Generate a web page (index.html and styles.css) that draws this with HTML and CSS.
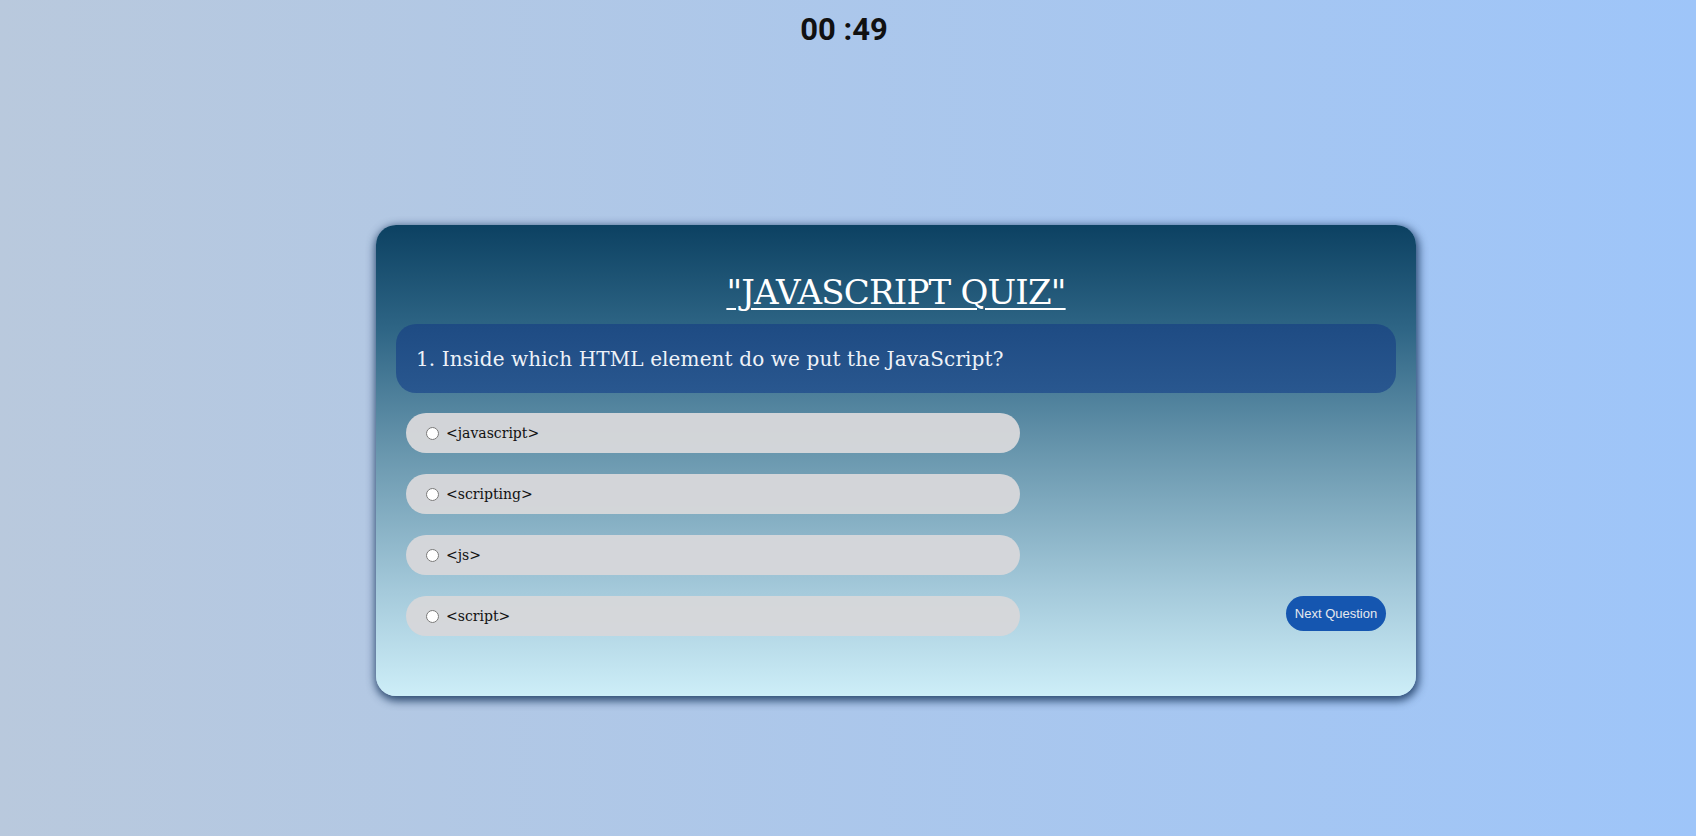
FILE: index.html
```html
<!DOCTYPE html>
<html lang="en">
<head>
<meta charset="utf-8">
<title>JavaScript Quiz</title>
<link rel="stylesheet" href="styles.css">
</head>
<body>
  <div class="timer">00 :49</div>
  <div class="card">
    <h1 class="title">"JAVASCRIPT QUIZ"</h1>
    <div class="question">1. Inside which HTML element do we put the JavaScript?</div>
    <div class="answers-row">
      <ul class="options">
        <li class="option"><input type="radio" name="q1" class="radio"><span>&lt;javascript&gt;</span></li>
        <li class="option"><input type="radio" name="q1" class="radio"><span>&lt;scripting&gt;</span></li>
        <li class="option"><input type="radio" name="q1" class="radio"><span>&lt;js&gt;</span></li>
        <li class="option"><input type="radio" name="q1" class="radio"><span>&lt;script&gt;</span></li>
      </ul>
      <button class="next">Next Question</button>
    </div>
  </div>
</body>
</html>
```
FILE: styles.css
```css
html, body {
  margin: 0;
  padding: 0;
}
body {
  min-height: 836px;
  background: linear-gradient(to right, #b9c9dd, #9ec5f9);
  font-family: "DejaVu Serif", serif;
  overflow: hidden;
}
.timer {
  font-family: Roboto, "Liberation Sans", sans-serif;
  font-weight: 700;
  font-size: 31px;
  line-height: 36px;
  text-align: center;
  color: #111;
  padding-top: 12px;
  padding-right: 8px;
}
.card {
  box-sizing: border-box;
  width: 1040px;
  height: 471px;
  margin: 177px 0 0 376px;
  padding: 0 20px;
  border-radius: 20px;
  background: linear-gradient(to bottom, #0c4162 0%, #2e6585 22%, #6896ad 48%, #a5cadb 78%, #cdeef8 100%);
  box-shadow: 1px 3px 8px 2px rgba(25, 55, 95, 0.85);
  display: flex;
  flex-direction: column;
}
.title {
  margin: 42px 0 0;
  text-align: center;
  font-weight: 400;
  font-size: 34px;
  letter-spacing: -0.8px;
  line-height: 50px;
  color: #fff;
  text-decoration: underline;
  text-decoration-thickness: 2px;
  text-underline-offset: 4px;
}
.question {
  margin-top: 7px;
  height: 69px;
  box-sizing: border-box;
  padding: 0 20px;
  display: flex;
  align-items: center;
  border-radius: 20px;
  background: linear-gradient(to bottom, #1e4b83, #29578f);
  color: #eef2f8;
  font-size: 20px;
  letter-spacing: 0.12px;
}
.answers-row {
  display: flex;
  justify-content: space-between;
  align-items: flex-end;
  margin-top: 20px;
  padding: 0 0 0 10px;
}
.options {
  list-style: none;
  margin: 0;
  padding: 0;
  width: 614px;
  display: flex;
  flex-direction: column;
  gap: 21px;
}
.option {
  height: 40px;
  border-radius: 20px;
  background: rgba(214, 215, 218, 0.97);
  display: flex;
  align-items: center;
  padding-left: 20px;
  font-size: 14px;
  color: #111;
}
.radio {
  margin: 0 7px 0 0;
  width: 13px;
  height: 13px;
}
.next {
  margin: 0 10px 5px 0;
  width: 100px;
  height: 35px;
  border: none;
  border-radius: 18px;
  background: #1556b0;
  color: #e6e9ee;
  font-family: Arial, "Liberation Sans", sans-serif;
  font-size: 13px;
  padding: 0;
}
```
